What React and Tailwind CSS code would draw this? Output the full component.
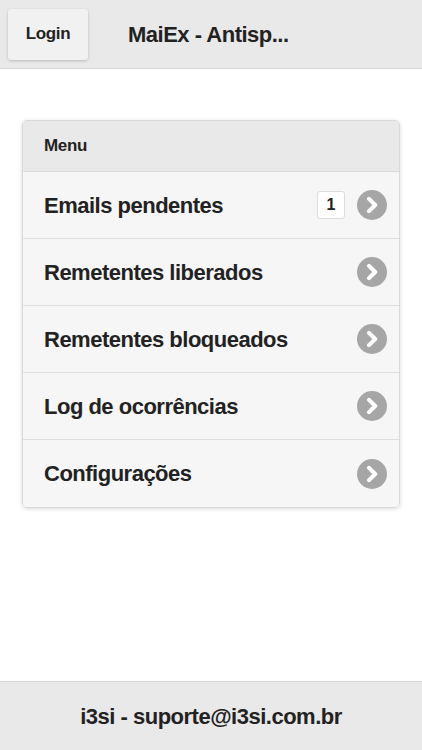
import React from 'react';

const ITEMS = [
  { label: 'Emails pendentes', count: 1 },
  { label: 'Remetentes liberados' },
  { label: 'Remetentes bloqueados' },
  { label: 'Log de ocorrências' },
  { label: 'Configurações' },
];

function Chevron() {
  return (
    <span className="flex h-[30px] w-[30px] items-center justify-center rounded-full bg-[#a6a6a6]">
      <svg width="16" height="18" viewBox="0 0 16 18" fill="none">
        <path d="M5 2.8 L11.2 9 L5 15.2" stroke="#fff" strokeWidth="4" strokeLinecap="round" strokeLinejoin="round" />
      </svg>
    </span>
  );
}

export default function App() {
  return (
    <div
      className="flex h-[750px] w-[422px] flex-col bg-white text-[#222]"
      style={{ fontFamily: '"Liberation Sans", Arial, sans-serif' }}
    >
      {/* Header */}
      <div className="flex h-[69px] items-center border-b border-[#d6d6d6] bg-[#e9e9e9] pl-2">
        <button className="flex h-[51px] w-[80px] items-center justify-center rounded-[3px] bg-[#f1f1f1] text-[17px] font-bold tracking-[-0.4px] shadow-[0_1px_3px_rgba(0,0,0,0.2)]">
          Login
        </button>
        <h1 className="ml-10 text-[22px] font-bold tracking-[-0.5px]">MaiEx - Antisp...</h1>
      </div>

      {/* Menu */}
      <div className="flex-1 px-[22px] pt-[51px]">
        <div className="overflow-hidden rounded-[5px] border border-[#d9d9d9] shadow-[0_1px_4px_rgba(0,0,0,0.15)]">
          <div className="flex h-[51px] items-center border-b border-[#d9d9d9] bg-[#e9e9e9] px-[21px] text-[17px] font-bold tracking-[-0.3px]">
            Menu
          </div>
          {ITEMS.map((item, i) => (
            <div
              key={item.label}
              className={`flex h-[67px] items-center bg-[#f6f6f6] pl-[21px] pr-[12px] ${
                i < ITEMS.length - 1 ? 'border-b border-[#dedede]' : ''
              }`}
            >
              <span className="flex-1 text-[22px] font-bold tracking-[-0.5px]">{item.label}</span>
              {item.count && (
                <span className="mr-[12px] flex h-[28px] w-[28px] items-center justify-center rounded-[3px] border border-[#dcdcdc] bg-white text-[16px] font-bold">
                  {item.count}
                </span>
              )}
              <Chevron />
            </div>
          ))}
        </div>
      </div>

      {/* Footer */}
      <div className="flex h-[69px] items-center justify-center border-t border-[#d6d6d6] bg-[#e9e9e9] text-[22px] font-bold tracking-[-0.5px]">
        i3si - suporte@i3si.com.br
      </div>
    </div>
  );
}
